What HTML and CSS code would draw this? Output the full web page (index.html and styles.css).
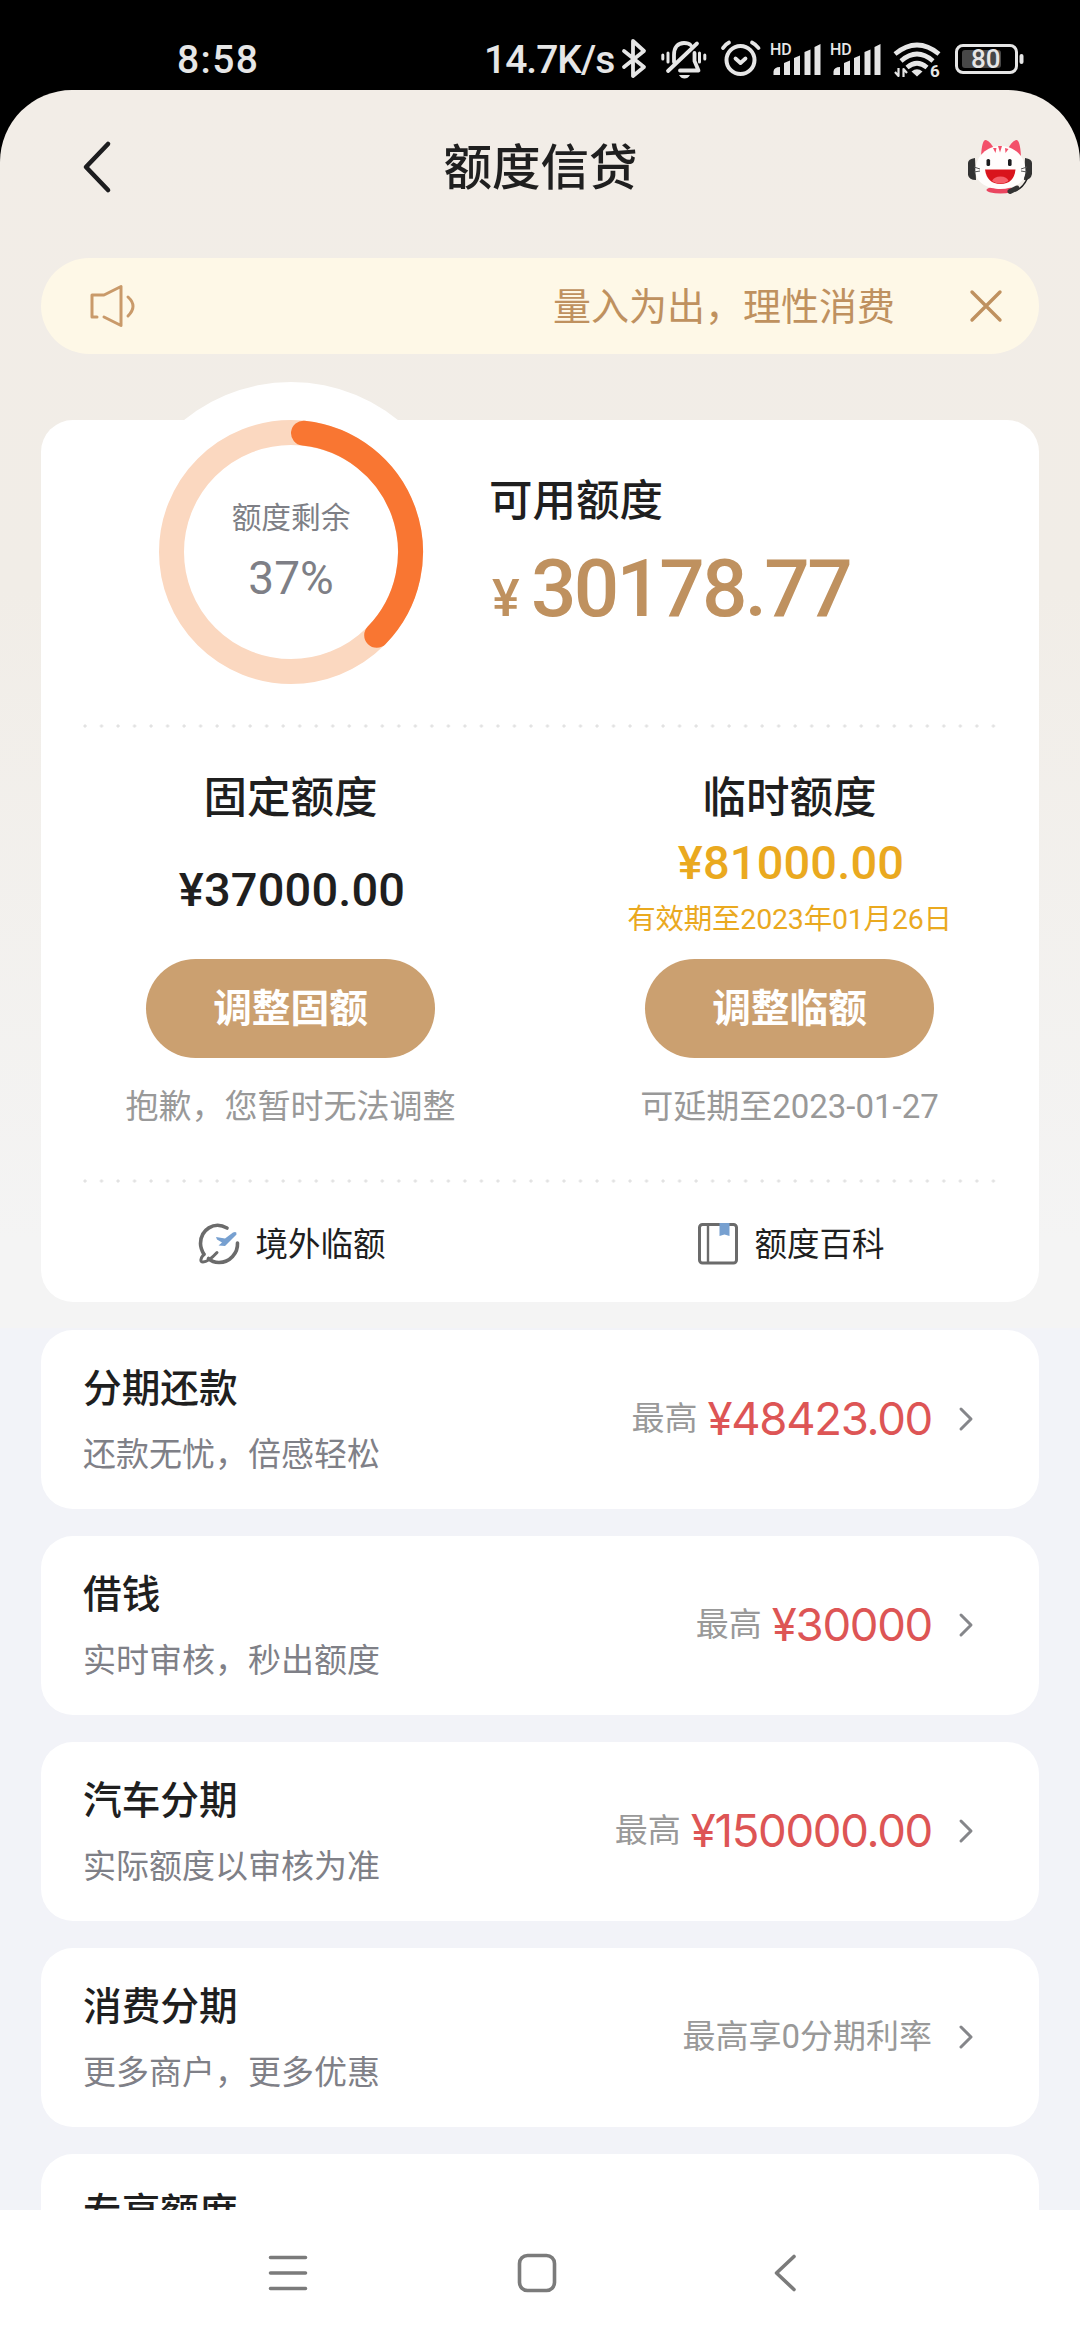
FILE: index.html
```html
<!DOCTYPE html>
<html lang="zh-CN">
<head>
<meta charset="utf-8">
<title>额度信贷</title>
<link rel="stylesheet" href="styles.css">
</head>
<body>
<div class="screen">
  <div class="status">
    <span class="clock">8:58</span>
    <span class="speed">14.7K/s</span>
    <svg class="st" width="416" height="48" viewBox="614 36 416 48" fill="none" stroke="#e6e6e6" stroke-linecap="round" stroke-linejoin="round">
      <path stroke-width="3.8" d="M624 51L644 67L633 76V41L644 51L624 67"/>
      <path stroke-width="3.8" d="M668 71L697 43.5M674 62V55C674 47 678 43 684 43C687 43 689 43.5 690.500 45M694.500 53V61L698.500 70.500H680"/>
      <path stroke-width="3" d="M662.800 55V59M668 53V62M699.500 53V62M704.800 55V59"/>
      <path stroke="none" fill="#e6e6e6" d="M679 75H690Q688 78.500 684.500 78.500Q681 78.500 679 75Z"/>
      <circle cx="740.500" cy="60" r="14" stroke-width="4"/>
      <path stroke-width="3.800" d="M735.500 58.500L740.500 63L745.500 58.500M723 48Q725 44.500 729 42.500M752 42.500Q756 44.500 758.500 48"/>
      <g id="sig" stroke="none" fill="#e6e6e6">
        <path d="M773.500 75V71.500Q774 67 780 67V75ZM784 75V63L790 60.500V75ZM794 75V58L800 55.500V75ZM804.500 75V52L810.500 49.500V75ZM814.500 75V47L820.500 44V75Z"/>
        <text class="hd" x="770" y="55">HD</text>
      </g>
      <use href="#sig" x="60"/>
      <g stroke-width="4.600" stroke-linecap="butt">
        <path d="M895 54Q917 36 939 54M901 61Q917 47 933 61M907 67.500Q917 59 927 67.500"/>
      </g>
      <path stroke="none" fill="#e6e6e6" d="M911.500 71.500Q917 67 922.500 71.500L917 76.500Z"/>
      <path stroke-width="2.200" stroke-linecap="butt" d="M898.500 68V76L895 72M903.500 77V69L907 73"/>
      <text class="six" x="930" y="77" stroke="none">6</text>
      <rect x="956.500" y="45.500" width="60" height="27" rx="6.500" stroke-width="3"/>
      <rect x="962" y="50" width="39" height="18" rx="3" fill="#484848" stroke="none"/>
      <path stroke-width="4" d="M1021.500 56V62"/>
      <text class="pct" x="971" y="68" stroke="none">80</text>
    </svg>
  </div>

  <main class="page">
    <header class="head">
      <svg width="32" height="56" viewBox="0 0 32 56" fill="none" stroke="#1d1d1f" stroke-width="4.600" stroke-linecap="round" stroke-linejoin="round"><path d="M26 5L4 28L26 51"/></svg>
      <h1>额度信贷</h1>
      <svg width="70" height="64" viewBox="965 134 70 64">
        <path fill="#f3506a" d="M981 155Q982 138 986 139Q991 141 994 148ZM1021 155Q1020 138 1016 139Q1011 141 1008 148Z"/>
        <path fill="#333" d="M975 157Q968 158 968 162V174Q969 179 976 179ZM1025 157Q1032 158 1032 162V173Q1031 179 1024 179Z"/>
        <ellipse cx="1000.500" cy="189" rx="14" ry="3.500" fill="#ea4660"/>
        <path fill="#fffdfc" d="M1000.500 145C1014 145 1025.500 155 1025.500 170C1025.500 182 1013 188 1000.500 188C988 188 975.500 182 975.500 170C975.500 155 987 145 1000.500 145Z"/>
        <path fill="#f3506a" d="M993 147L995.500 152L996.500 147ZM998 145L1000 151.500L1002 145ZM1005 147L1005.500 152L1008.500 148Z"/>
        <rect x="986.500" y="158" width="3.600" height="7" rx="1.600" fill="#1c1c1e"/>
        <rect x="1008" y="158" width="3.600" height="7" rx="1.600" fill="#1c1c1e"/>
        <path fill="#d9141c" d="M985 168.500H1015.500Q1014 183 1000.500 183Q987 183 985 168.500Z"/>
        <path fill="#f5606a" d="M992 180Q994 175.500 1000.500 175.500Q1007 175.500 1008.500 180Q1000 185 992 180Z"/>
        <path fill="none" stroke="#555" d="M974 166L980 168M974 171L980 170M1027 166L1021 168M1027 171L1021 170"/>
        <path fill="none" stroke="#222" stroke-width="1.600" d="M1027 178Q1023 187 1015 190"/>
        <path fill="none" stroke="#333" stroke-width="5" stroke-linecap="round" d="M1010 190.500L1017 187"/>
      </svg>
    </header>

    <div class="notice">
      <svg width="46" height="46" viewBox="90 283 46 46" fill="none" stroke="#c99a6a" stroke-width="3" stroke-linecap="round" stroke-linejoin="round"><path d="M97 317H92V295H104L121 286.500V325.500L104 317M128 297Q138 306 128 316"/></svg>
      <span>量入为出，理性消费</span>
      <svg width="34" height="34" viewBox="0 0 34 34" fill="none" stroke="#bf915f" stroke-width="3.400" stroke-linecap="round"><path d="M3 3L31 31M31 3L3 31"/></svg>
    </div>

    <section class="card">
      <div class="hero">
        <svg class="ring" width="340" height="340" viewBox="-170 -170 340 340" fill="none">
          <circle r="170" fill="#fff"/>
          <circle r="119.500" stroke="#fbd8c0" stroke-width="25"/>
          <path d="M12.500 -118.850A119.500 119.500 0 0 1 85.700 83.300" stroke="#f97632" stroke-width="25" stroke-linecap="round"/>
          <text class="ring-label" y="-24">额度剩余</text>
          <text class="ring-value" y="42">37%</text>
        </svg>
        <div class="avail">
          <h2>可用额度</h2>
          <p><i>¥</i>30178.77</p>
        </div>
      </div>
      <div class="dots"></div>
      <div class="cols">
        <div class="col">
          <h2>固定额度</h2>
          <div class="sum"><b>¥37000.00</b></div>
          <span class="btn">调整固额</span>
          <p class="note">抱歉，您暂时无法调整</p>
        </div>
        <div class="col">
          <h2>临时额度</h2>
          <div class="sum temp"><b>¥81000.00</b><span>有效期至2023年01月26日</span></div>
          <span class="btn">调整临额</span>
          <p class="note">可延期至2023-01-27</p>
        </div>
      </div>
      <div class="dots"></div>
      <div class="links">
        <div class="link">
          <svg width="46" height="46" viewBox="196 1219 46 46" fill="none" stroke="#6b6b6b" stroke-width="3.600" stroke-linecap="round"><path d="M227 1227C214 1219.500 200.500 1229 200.500 1242.500C200.500 1247 202 1250 204 1253.500M237.500 1242C238 1252 230 1261.500 219 1261.500C214.500 1261.500 211 1260 208.500 1257.500"/><path stroke-width="3" d="M204 1253C200 1258 200 1261 203 1261C207 1261 212 1257 217 1251.500"/><path stroke="none" fill="#77a0d0" d="M216 1236L225 1237.500L233 1231.500Q237 1230 236.500 1233.500L225 1245L218.500 1244.500L222 1241.500L217 1238.500Z"/></svg>
          <span>境外临额</span>
        </div>
        <div class="link">
          <svg width="46" height="46" viewBox="695 1219 46 46" fill="none" stroke="#6b6b6b" stroke-width="3"><rect x="699.500" y="1223.500" width="37" height="38.500" rx="3"/><path stroke-width="2.400" d="M708 1223V1262"/><path stroke="none" fill="#77a0d0" d="M719.500 1222H729.500V1235L724.500 1233.500L719.500 1235Z"/></svg>
          <span>额度百科</span>
        </div>
      </div>
    </section>

    <div class="list">
      <div class="item"><div><h3>分期还款</h3><p>还款无忧，倍感轻松</p></div><div class="right"><span>最高</span><b>¥48423.00</b><svg width="18" height="28" viewBox="0 0 18 28"><path d="M4 4L14 14L4 24"/></svg></div></div>
      <div class="item"><div><h3>借钱</h3><p>实时审核，秒出额度</p></div><div class="right"><span>最高</span><b>¥30000</b><svg width="18" height="28" viewBox="0 0 18 28"><path d="M4 4L14 14L4 24"/></svg></div></div>
      <div class="item"><div><h3>汽车分期</h3><p>实际额度以审核为准</p></div><div class="right"><span>最高</span><b>¥150000.00</b><svg width="18" height="28" viewBox="0 0 18 28"><path d="M4 4L14 14L4 24"/></svg></div></div>
      <div class="item"><div><h3>消费分期</h3><p>更多商户，更多优惠</p></div><div class="right"><span>最高享0分期利率</span><svg width="18" height="28" viewBox="0 0 18 28"><path d="M4 4L14 14L4 24"/></svg></div></div>
      <div class="item"><div><h3>专享额度</h3></div></div>
    </div>
  </main>

  <nav class="nav">
    <svg width="44" height="44" viewBox="0 0 44 44"><path d="M4.500 6.500H39.500M4.500 22H39.500M4.500 37.500H39.500"/></svg>
    <svg width="44" height="44" viewBox="0 0 44 44"><rect x="4.500" y="4.500" width="35" height="35" rx="8"/></svg>
    <svg width="44" height="44" viewBox="0 0 44 44"><path d="M31 5.500L13.500 22L31 38.500"/></svg>
  </nav>
</div>
</body>
</html>
```
FILE: styles.css
```css
* { box-sizing: border-box; margin: 0; padding: 0; }
body {
  background: #000;
  font-family: Roboto, "Noto Sans CJK SC", sans-serif;
  color: #1f1f1f;
}
h1, h2, h3 { font-weight: 500; }
svg { display: block; flex: none; }

.screen { width: 1080px; height: 2340px; overflow: hidden; display: flex; flex-direction: column; }

/* system status bar */
.status {
  height: 90px;
  padding: 30px 50px 0 177px;
  display: flex;
  align-items: center;
  color: #e6e6e6;
  font-size: 39px;
  font-weight: 500;
  line-height: 60px;
  white-space: nowrap;
}
.clock { width: 307px; letter-spacing: 1.4px; }
.speed { width: 130px; letter-spacing: -1px; }
.hd { font-size: 16px; font-weight: 500; }
.six { font-size: 17px; font-weight: 700; fill: #e6e6e6; }
.pct { font-size: 26px; font-weight: 500; fill: #e6e6e6; }

.page {
  height: 2120px;
  overflow: hidden;
  border-radius: 72px 72px 0 0;
  background: linear-gradient(#f2ede7 0, #f1ede7 500px, #f4f4f4 1150px, #f4f4f4 1238px, #f2f3f8 1238px);
}
.head {
  height: 168px;
  padding: 0 45px 14px 82px;
  display: flex;
  align-items: center;
  justify-content: space-between;
}
.head h1 { font-size: 48.500px; line-height: 70px; padding: 4px 0 0 2px; }

.notice {
  height: 96px;
  margin: 0 41px;
  padding: 0 36px 0 49px;
  border-radius: 48px;
  background: #fef8e7;
  color: #bf915f;
  display: flex;
  align-items: center;
}
.notice span { margin: 2px 74px 0 auto; font-size: 38px; line-height: 60px; }

.card { margin: 66px 41px 0; height: 882px; border-radius: 32px; background: #fff; }
.hero { height: 304px; padding-left: 80px; display: flex; }
.ring { margin-top: -38px; }
.ring text { text-anchor: middle; fill: #7e7f86; }
.ring-label { font-size: 29.700px; }
.ring-value { font-size: 46px; }
.avail { padding: 52px 0 0 28px; }
.avail p {
  display: flex;
  align-items: baseline;
  margin-top: 7px;
  color: #bf915f;
  font-size: 80px;
  font-weight: 500;
  line-height: 100px;
  letter-spacing: -2.700px;
}
.avail i { width: 42px; padding-left: 3px; font-size: 52px; font-style: normal; }
h2 { font-size: 43.500px; line-height: 60px; }

.dots {
  height: 4px;
  margin: 0 38px 0 42px;
  background: radial-gradient(circle at 2px 2px, #e2e2e2 1.200px, transparent 2px) 0 0 / 16.530px 4px repeat-x;
}

.cols, .links { display: grid; grid-template-columns: 1fr 1fr; }
.cols { height: 451px; }
.col { display: flex; flex-direction: column; align-items: center; padding-top: 41px; }
.sum { height: 130px; padding-top: 31px; display: flex; flex-direction: column; align-items: center; }
.sum b { font-size: 47px; font-weight: 500; line-height: 60px; padding-left: 3px; letter-spacing: .150px; }
.temp { padding-top: 4px; color: #eaa91f; }
.temp span { margin-top: 7px; font-size: 28.500px; line-height: 40px; letter-spacing: -.200px; }
.btn {
  width: 289px;
  height: 99px;
  border-radius: 50px;
  background: #cba070;
  color: #fff;
  font-size: 38.700px;
  font-weight: 700;
  line-height: 100px;
  text-align: center;
}
.note { margin-top: 29px; font-size: 33px; line-height: 40px; color: #999; }
.links { height: 119px; }
.link { display: flex; align-items: center; justify-content: center; gap: 13px; padding-left: 1px; font-size: 32.500px; }
.link span { margin-top: -3px; }

.list { padding: 28px 41px 0; display: flex; flex-direction: column; gap: 27px; }
.item {
  flex: none;
  height: 179px;
  padding: 31px 64px 0 42px;
  border-radius: 32px;
  background: #fff;
  display: flex;
  justify-content: space-between;
}
.item h3 { font-size: 38.700px; line-height: 56px; }
.item p { margin-top: 18px; font-size: 33px; line-height: 40px; color: #7f8087; }
.right { height: 60px; margin-top: 28px; display: flex; align-items: center; color: #999; font-size: 33px; line-height: 60px; }
.right b { margin-left: 10px; font-family: Inter, Roboto, sans-serif; font-size: 45.500px; font-weight: 400; color: #dd5555; letter-spacing: -1.300px; }
.right svg { margin-left: 25px; fill: none; stroke: #85868a; stroke-width: 3; stroke-linecap: round; stroke-linejoin: round; }

.nav {
  flex: 1;
  padding: 0 273px 4px 266px;
  background: #fff;
  display: flex;
  align-items: center;
  justify-content: space-between;
}
.nav svg { fill: none; stroke: #7b7b7b; stroke-width: 3.600; stroke-linecap: round; stroke-linejoin: round; }
```
